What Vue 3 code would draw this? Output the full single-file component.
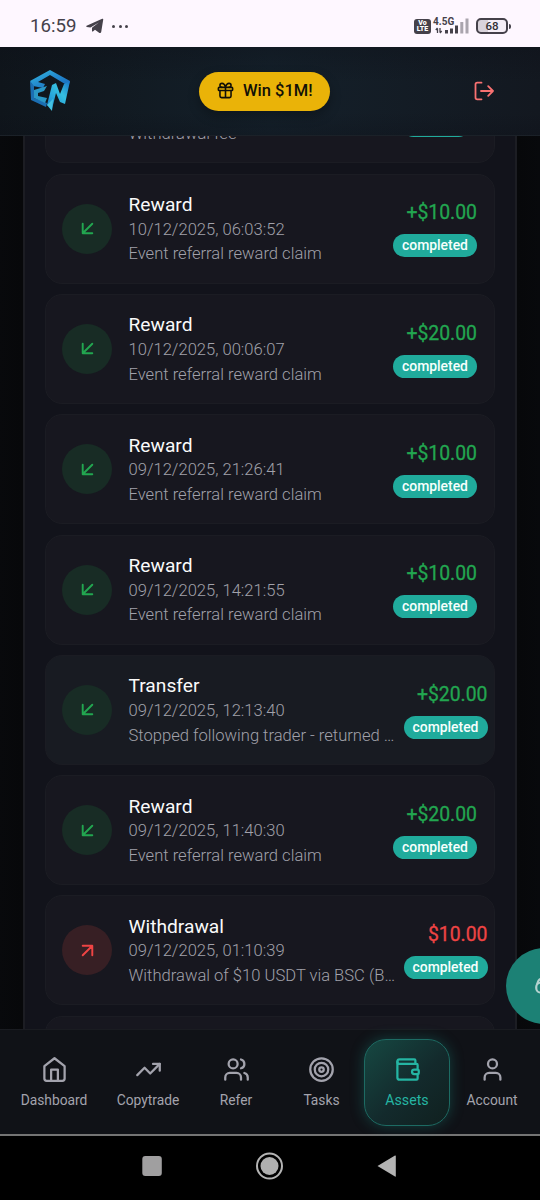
<script setup>
const rows = [
  { type: '', date: '', note: 'Withdrawal fee', amount: '', out: true, narrow: true },
  { type: 'Reward', date: '10/12/2025, 06:03:52', note: 'Event referral reward claim', amount: '+$10.00' },
  { type: 'Reward', date: '10/12/2025, 00:06:07', note: 'Event referral reward claim', amount: '+$20.00' },
  { type: 'Reward', date: '09/12/2025, 21:26:41', note: 'Event referral reward claim', amount: '+$10.00' },
  { type: 'Reward', date: '09/12/2025, 14:21:55', note: 'Event referral reward claim', amount: '+$10.00' },
  { type: 'Transfer', date: '09/12/2025, 12:13:40', note: 'Stopped following trader - returned …', amount: '+$20.00', wide: true, tint: true },
  { type: 'Reward', date: '09/12/2025, 11:40:30', note: 'Event referral reward claim', amount: '+$20.00' },
  { type: 'Withdrawal', date: '09/12/2025, 01:10:39', note: 'Withdrawal of $10 USDT via BSC (B…', amount: '$10.00', wide: true, out: true },
  { type: '', date: '', note: '', amount: '', blank: true },
]
const tabs = [
  { label: 'Dashboard', paths: ['m3 9 9-7 9 7v11a2 2 0 0 1-2 2H5a2 2 0 0 1-2-2z', 'M9 22V12h6v10'], circles: [] },
  { label: 'Copytrade', paths: ['M22 7 13.5 15.5 8.5 10.5 2 17', 'M16 7h6v6'], circles: [] },
  { label: 'Refer', paths: ['M16 21v-2a4 4 0 0 0-4-4H6a4 4 0 0 0-4 4v2', 'M22 21v-2a4 4 0 0 0-3-3.87', 'M16 3.13a4 4 0 0 1 0 7.75'], circles: [[9, 7, 4]] },
  { label: 'Tasks', paths: [], circles: [[12, 12, 10], [12, 12, 6], [12, 12, 2]] },
  { label: 'Assets', active: true, paths: ['M19 7V4a1 1 0 0 0-1-1H5a2 2 0 0 0 0 4h15a1 1 0 0 1 1 1v4h-3a2 2 0 0 0 0 4h3a1 1 0 0 0 1-1v-2a1 1 0 0 0-1-1', 'M3 5v14a2 2 0 0 0 2 2h15a1 1 0 0 0 1-1v-4'], circles: [] },
  { label: 'Account', paths: ['M19 21v-2a4 4 0 0 0-4-4H9a4 4 0 0 0-4 4v2'], circles: [[12, 7, 4]] },
]
</script>

<template>
  <div class="phone">
    <div class="status">
      <span class="clock">16:59</span>
      <svg class="plane" width="18" height="16" viewBox="0 0 18 16"><path d="M.6 7.800 16.200.8q1.200-.4 1 .9L15.200 14q-.4 1.600-1.800.9L9 11.800 7.200 13.300q-1.200.8-1.200-.6V9.800L12.800 4.500 4.500 9.600.8 8.900Q-.3 8.400.6 7.800z" fill="#45414a" /></svg>
      <span class="dots"><i /><i /><i /></span>
      <span class="grow" />
      <span class="volte"><b>Vo</b><b>LTE</b></span>
      <span class="signal">
        <b>4.5G</b>
        <svg width="36" height="16" viewBox="0 0 36 16">
          <path d="M4.500 15V10.500M2.800 12 4.500 10M7 10v4.500M8.700 13 7 15" stroke="#45414a" stroke-width="1.300" fill="none" />
          <path d="M12 12h3v3.500h-3zM17 10.500h3v5h-3zM22 7.500h3v8h-3z" fill="#45414a" />
          <path d="M27.300 4h3v11.500h-3zM32.500.5h3v15h-3z" fill="#aaa5ae" />
        </svg>
      </span>
      <span class="battery"><em>68</em></span>
      <span class="cap" />
    </div>

    <header class="header">
      <svg class="logo" width="42" height="44" viewBox="0 0 42 44">
        <defs>
          <linearGradient id="lg" x1="0" y1="0" x2="1" y2="1"><stop offset="0" stop-color="#35bde0" /><stop offset=".5" stop-color="#2389cd" /><stop offset="1" stop-color="#1768bd" /></linearGradient>
          <linearGradient id="ln" x1="0" y1="1" x2="1" y2="0"><stop offset="0" stop-color="#1783cf" /><stop offset=".6" stop-color="#35bfe0" /><stop offset="1" stop-color="#1770c5" /></linearGradient>
        </defs>
        <path d="M1 12 21 1 41 12 39 18 36 15 21 6 9 13 16 15 14 19 4 17Z" fill="url(#lg)" />
        <path d="M1 12 5 17V29L18 34 17 38 2 31Z" fill="#1b6eb2" />
        <path d="M5 21 18 17 15 22 9 24V27L18 29 16 34 5 29Z" fill="#2b98c6" />
        <path d="M18 36 23 16 27 14 31 25 35 15 41 12 36 35 31 33 27 24 23 40Z" fill="url(#ln)" />
        <path d="M18 36 24 30 23 42Z" fill="#45c2e2" />
      </svg>
      <button class="win">
        <svg width="19" height="19" viewBox="0 0 24 24" class="line"><rect x="3" y="8" width="18" height="4" rx="1" /><path d="M12 8v13M19 12v7a2 2 0 0 1-2 2H7a2 2 0 0 1-2-2v-7M7.500 8a2.500 2.500 0 0 1 0-5A4.800 8 0 0 1 12 8a4.800 8 0 0 1 4.500-5 2.500 2.500 0 0 1 0 5" /></svg>
        <span>Win $1M!</span>
      </button>
      <svg class="logout" width="20" height="20" viewBox="0 0 20 20"><path d="M7.500 1.700H3.300Q1.500 1.700 1.500 3.500v13q0 1.800 1.800 1.800h4.200M7 10h12M14.200 5.200 19 10l-4.800 4.800" /></svg>
    </header>

    <main class="main">
      <section class="panel">
        <article v-for="(r, i) in rows" :key="i" class="card" :class="{ wide: r.wide, out: r.out, tint: r.tint, narrow: r.narrow }">
          <template v-if="!r.blank">
            <span class="badge">
              <svg width="23" height="23" viewBox="0 0 24 24" class="line"><path :d="r.out ? 'M7 7h10v10M7 17 17 7' : 'M17 7 7 17M17 17H7V7'" /></svg>
            </span>
            <div class="info">
              <div class="type">{{ r.type }}</div>
              <div class="sub">{{ r.date }}</div>
              <div class="sub">{{ r.note }}</div>
            </div>
            <div class="right">
              <div class="amount">{{ r.amount }}</div>
              <div class="pill">{{ r.amount ? 'completed' : '' }}</div>
            </div>
          </template>
        </article>
      </section>
      <div class="chat">
        <svg width="26" height="26" viewBox="0 0 24 24" class="line"><rect x="3" y="9" width="18" height="9" rx="4" /><path d="M4 10q1-5 5-5" /></svg>
      </div>
    </main>

    <nav class="nav">
      <a v-for="t in tabs" :key="t.label" class="tab" :class="{ active: t.active }">
        <svg width="27" height="27" viewBox="0 0 24 24" class="line">
          <path v-for="p in t.paths" :key="p" :d="p" />
          <circle v-for="c in t.circles" :key="c[2]" :cx="c[0]" :cy="c[1]" :r="c[2]" />
        </svg>
        <span>{{ t.label }}</span>
      </a>
    </nav>

    <div class="system">
      <svg width="256" height="28" viewBox="0 0 256 28">
        <rect x="2.300" y="4" width="19.500" height="20" rx="3" fill="#a09fa0" />
        <circle cx="129.500" cy="14" r="12.500" fill="none" stroke="#b4b4b4" stroke-width="2" />
        <circle cx="129.500" cy="14" r="9" fill="#b0b0b0" />
        <path d="M237.500 14 255 3.500q.8-.4.8.6v20q0 1-.8.5Z" fill="#b4b4b4" />
      </svg>
    </div>
  </div>
</template>

<style>
body { background: #08090c; }
</style>
<style scoped>
* { box-sizing: border-box; }
.phone { width: 540px; height: 1200px; display: flex; flex-direction: column; overflow: hidden; background: #08090c; font-family: Roboto, "Liberation Sans", sans-serif; }
.line { fill: none; stroke: currentColor; stroke-width: 2; stroke-linecap: round; stroke-linejoin: round; }

.status { height: 47px; flex: none; background: #fef7ff; display: flex; align-items: center; padding: 5px 30px 0 30px; color: #45414a; }
.clock { font-size: 18.700px; width: 56px; }
.plane { display: block; }
.dots { display: flex; gap: 3.500px; margin-left: 8px; }
.dots i { width: 3px; height: 3px; border-radius: 50%; background: #45414a; }
.grow { flex: 1; }
.volte { width: 17px; height: 15px; border-radius: 3px; background: #45414a; color: #fff; display: flex; flex-direction: column; align-items: center; justify-content: center; }
.volte b { font-size: 7px; line-height: 6.500px; font-weight: 900; }
.signal { position: relative; width: 36px; height: 16px; margin-left: 2px; margin-right: 7px; }
.signal b { position: absolute; left: 0; top: -1px; font-size: 10px; line-height: 9px; }
.signal svg { display: block; }
.battery { width: 32px; height: 16px; border: 2px solid #45414a; border-radius: 5px; background: linear-gradient(90deg, #d9d3db 35%, #f6eff7 35%); display: flex; align-items: center; justify-content: center; }
.battery em { font-style: normal; font-size: 11.500px; font-weight: 500; color: #322f36; }
.cap { width: 2px; height: 5px; background: #45414a; border-radius: 0 2px 2px 0; margin-left: 1px; margin-right: -1px; }

.header { height: 89px; flex: none; display: flex; align-items: center; padding: 0 46px 0 29px; position: relative; background: linear-gradient(180deg, rgba(13, 16, 24, .35), transparent 40%, transparent 75%, rgba(13, 16, 24, .3)), linear-gradient(90deg, #0f151b, #14202a 50%, #131820); border-bottom: 1px solid #1b2128; }
.logo { display: block; margin-right: 128px; margin-top: -1px; }
.win { width: 131px; height: 39px; border: 0; border-radius: 20px; background: #eab308; color: #121007; display: flex; align-items: center; padding: 0 0 1px 16.500px; gap: 8.500px; font: 500 16.500px Roboto, sans-serif; box-shadow: 0 5px 12px rgba(0, 0, 0, .3); }
.logout { margin-left: auto; fill: none; stroke: #f87171; stroke-width: 1.800; stroke-linecap: round; stroke-linejoin: round; }

.main { height: 893px; flex: none; position: relative; overflow: hidden; padding: 0 23px; background: linear-gradient(90deg, #08090c, #07080a 22px, #07080a 518px, #08090c); }
.panel { border: solid #1c1d23; border-width: 0 2px; background: #12131b; padding: 0 20px; margin-top: -82.700px; display: flex; flex-direction: column; gap: 10.300px; }
.card { height: 110px; flex: none; border: 1px solid #1b1c23; border-radius: 17px; background: #17171f; display: flex; align-items: center; padding: 0 17px 0 16px; }
.card.tint { background: #181b22; }
.card.wide { padding-right: 6.500px; }
.card.narrow { padding-right: 24px; }
.narrow .pill { width: 68px; }
.badge { width: 50px; height: 50px; flex: none; border-radius: 50%; background: #182c25; color: #22a650; display: flex; align-items: center; justify-content: center; }
.out .badge { background: #371f24; color: #ef4444; }
.info { margin-left: 16.500px; flex: 1; min-width: 0; white-space: nowrap; padding-top: 2px; }
.type { font-size: 19.200px; height: 25.500px; line-height: 25px; color: #fafafa; }
.sub { font-size: 16.580px; height: 24.700px; line-height: 24.700px; font-weight: 300; color: #a1a1aa; }
.right { display: flex; flex-direction: column; align-items: flex-end; padding-bottom: .6px; }
.amount { font-size: 19.400px; height: 27px; line-height: 27px; font-weight: 400; color: #22a650; -webkit-text-stroke: .3px currentColor; }
.out .amount { color: #ef4444; }
.pill { margin-top: 8px; height: 23px; line-height: 23px; width: 84px; text-align: center; border-radius: 12px; background: #20ab9c; color: #f7fffd; font-size: 13.900px; font-weight: 500; }
.chat { position: absolute; left: 506px; top: 812px; width: 76px; height: 76px; border-radius: 50%; background: #1c8175; color: #b4d3d0; display: flex; align-items: center; padding-left: 27px; }

.nav { height: 105px; flex: none; background: #101217; border-top: 1px solid #1a1c21; display: grid; grid-template-columns: 98px 90px 86px 85px 86px 84px; padding: 9px 6px 8px 5px; position: relative; }
.tab { display: flex; flex-direction: column; align-items: center; padding-top: 17px; color: #a3a3ad; font-size: 13.800px; border-radius: 22px; }
.tab span { margin-top: 8px; line-height: 18px; }
.tab.active { color: #25b5a3; font-size: 14.200px; border: 1px solid #1d6b63; background: linear-gradient(135deg, #164842, #132a2c 55%, #10201f); box-shadow: 0 0 14px rgba(25, 120, 110, .45); padding-top: 16px; height: 87px; }

.system { height: 66px; flex: none; background: #000; border-top: 2px solid #747474; padding: 16px 0 0 140px; }
.system svg { display: block; }
</style>
